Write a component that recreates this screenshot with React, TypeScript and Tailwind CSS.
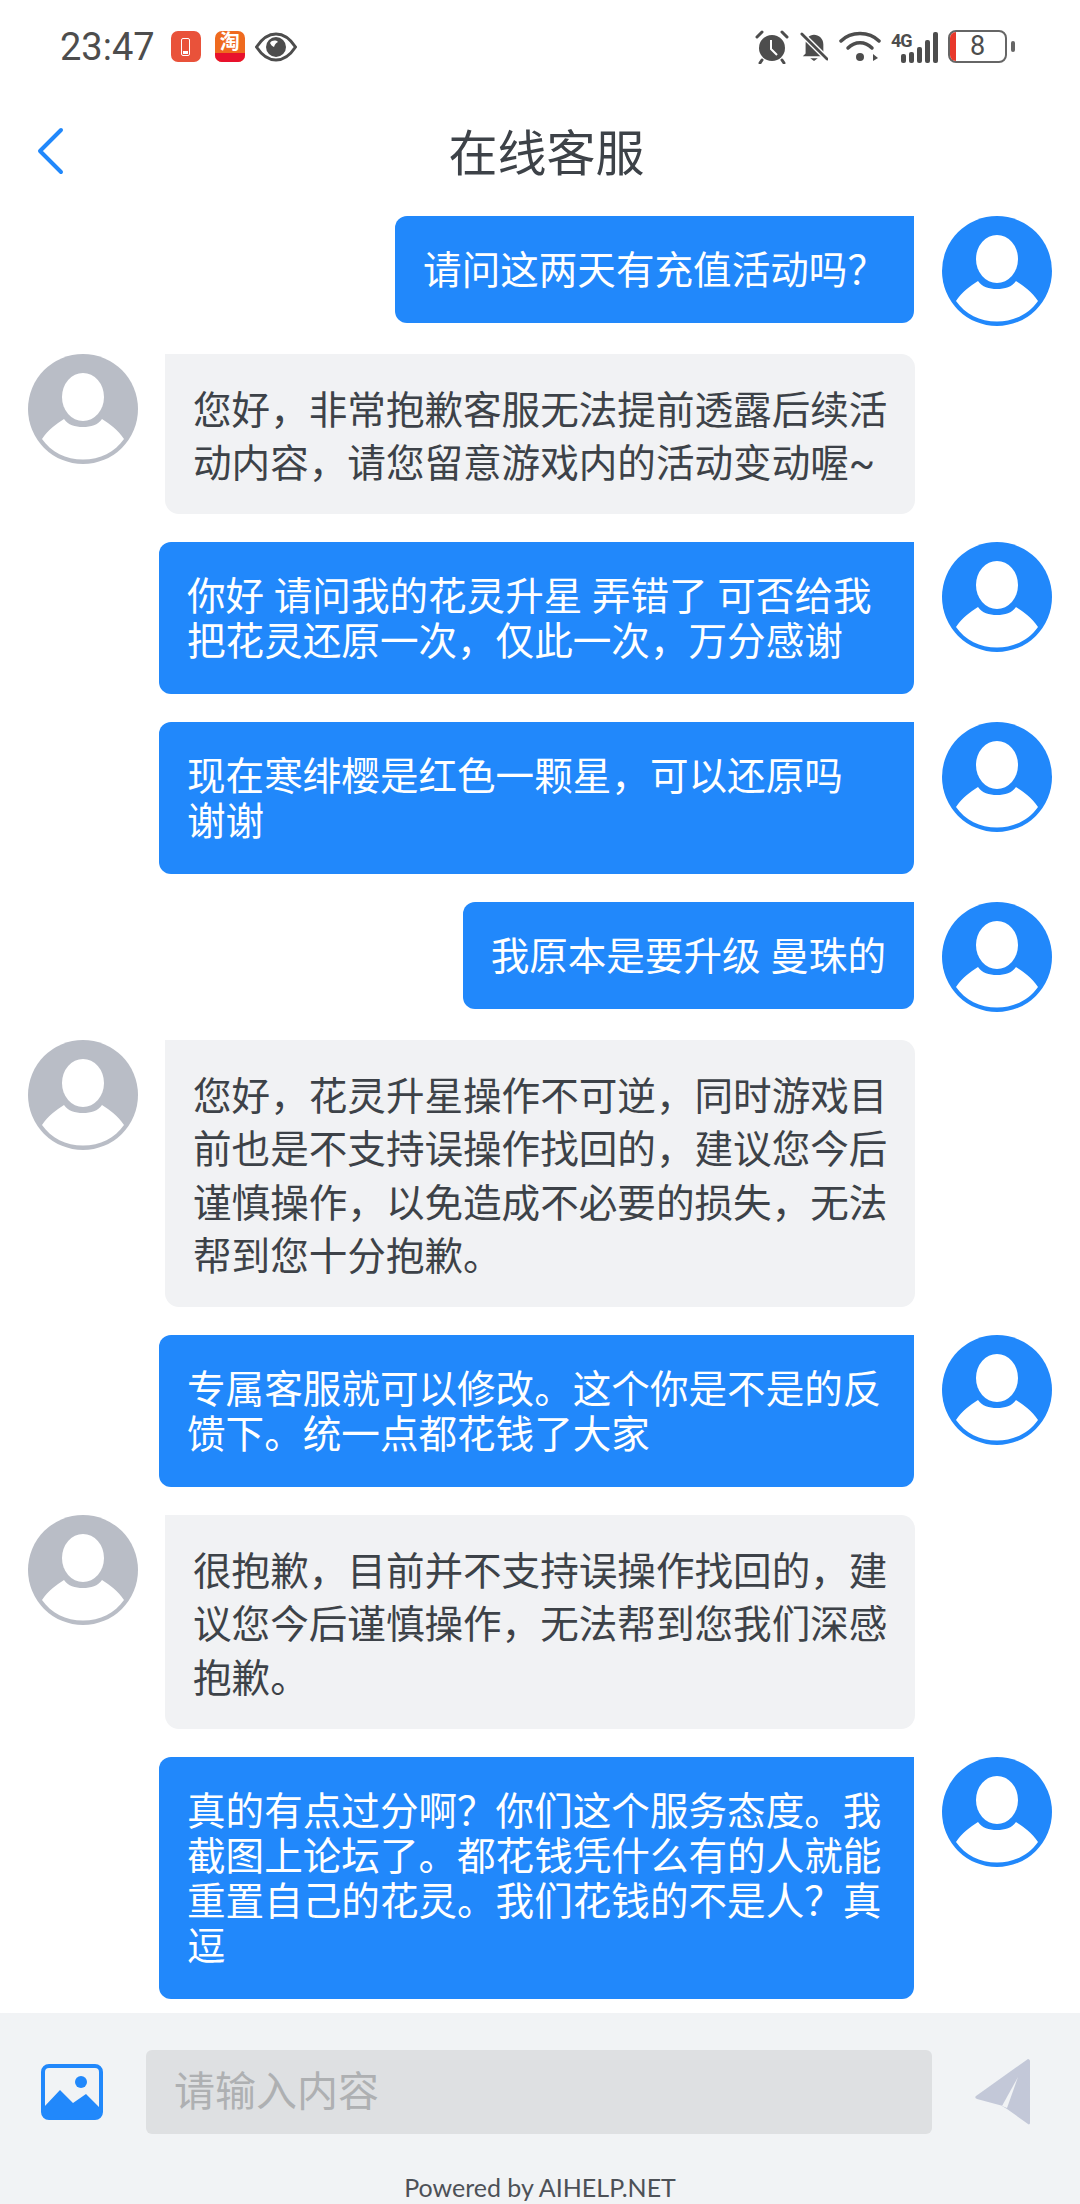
const cjk = "font-['Roboto','Noto_Sans_CJK_SC',sans-serif]";

type Msg = { from: "user" | "agent"; lines: string[] };

const messages: Msg[] = [
  { from: "user", lines: ["请问这两天有充值活动吗？"] },
  { from: "agent", lines: ["您好，非常抱歉客服无法提前透露后续活", "动内容，请您留意游戏内的活动变动喔~"] },
  { from: "user", lines: ["你好 请问我的花灵升星 弄错了 可否给我", "把花灵还原一次，仅此一次，万分感谢"] },
  { from: "user", lines: ["现在寒绯樱是红色一颗星，可以还原吗", "谢谢"] },
  { from: "user", lines: ["我原本是要升级 曼珠的"] },
  {
    from: "agent",
    lines: [
      "您好，花灵升星操作不可逆，同时游戏目",
      "前也是不支持误操作找回的，建议您今后",
      "谨慎操作，以免造成不必要的损失，无法",
      "帮到您十分抱歉。",
    ],
  },
  { from: "user", lines: ["专属客服就可以修改。这个你是不是的反", "馈下。统一点都花钱了大家"] },
  { from: "agent", lines: ["很抱歉，目前并不支持误操作找回的，建", "议您今后谨慎操作，无法帮到您我们深感", "抱歉。"] },
  {
    from: "user",
    lines: [
      "真的有点过分啊？你们这个服务态度。我",
      "截图上论坛了。都花钱凭什么有的人就能",
      "重置自己的花灵。我们花钱的不是人？真",
      "逗",
    ],
  },
];

function Avatar({ color }: { color: string }) {
  return (
    <svg width="110" height="110" viewBox="0 0 110 110" className="shrink-0">
      <circle cx="55" cy="55" r="55" fill={color} />
      <ellipse cx="55" cy="43" rx="21" ry="24" fill="#fff" />
      <path
        d="M14 85C20 76 28 70 36 65C40 71 47 73 55 73C63 73 70 71 74 65C82 70 90 76 96 85C87 98 72 105.5 55 105.5C38 105.5 23 98 14 85Z"
        fill="#fff"
      />
    </svg>
  );
}

function Row({ msg }: { msg: Msg }) {
  if (msg.from === "user") {
    return (
      <div className="flex items-start justify-end pr-[28px]">
        <div
          className={`mr-[28px] rounded-b-[12px] rounded-tl-[12px] bg-[#2188fb] px-[28px] pb-[30px] pt-[32px] text-[38.6px] leading-[45px] text-white ${
            msg.lines.length > 1 ? "w-[755px]" : ""
          }`}
        >
          {msg.lines.map((l, i) => (
            <div key={i} className="whitespace-pre">{l}</div>
          ))}
        </div>
        <Avatar color="#2188fb" />
      </div>
    );
  }
  return (
    <div className="flex items-start pl-[28px]">
      <Avatar color="#b9bdc6" />
      <div className="ml-[27px] w-[750px] rounded-b-[14px] rounded-tr-[14px] bg-[#f1f2f4] px-[28px] pb-[23.5px] pt-[29.5px] text-[38.6px] leading-[53.5px] text-[#3d4248]">
        {msg.lines.map((l, i) => (
          <div key={i} className="whitespace-pre">{l}</div>
        ))}
      </div>
    </div>
  );
}

function StatusBar() {
  return (
    <div className="flex h-[92px] items-center justify-between pl-[60px] pr-[65px] pt-[1px] text-[#4d4d4d]">
      <div className="flex items-center">
        <span className="text-[38px] leading-none">23:47</span>
        <div className="ml-[16px] flex h-[31px] w-[30px] items-center justify-center rounded-[7px] bg-[#e9523a]">
          <div className="flex h-[18px] w-[9px] flex-col justify-end rounded-[2px] border border-white p-[1px]">
            <div className="h-[3px] bg-white" />
          </div>
        </div>
        <div className="ml-[14px] flex h-[31px] w-[30px] flex-col overflow-hidden rounded-[7px] bg-[#ef6a1f]">
          <div className="flex h-[22px] items-center justify-center text-[20px] font-bold leading-none text-white">淘</div>
          <div className="h-[9px] bg-[#e8112d]" />
        </div>
        <svg width="42" height="30" viewBox="0 0 42 30" className="ml-[10px]">
          <path d="M1.5 15C8 5 14 2 21 2C28 2 34 5 40.500 15C34 25 28 28 21 28C14 28 8 25 1.500 15Z" fill="none" stroke="#4d4d4d" strokeWidth="3" />
          <circle cx="21" cy="15" r="10" fill="#4d4d4d" />
          <path d="M15 11C17 8 21 8 23 10C21 11 20 12 19 15C17 14 16 13 15 11Z" fill="#fff" />
        </svg>
      </div>
      <div className="flex items-center">
        <svg width="34" height="34" viewBox="0 0 34 34">
          <circle cx="17" cy="18" r="13" fill="#4d4d4d" />
          <path d="M16 10V19L22 25" fill="none" stroke="#fff" strokeWidth="2" />
          <path d="M2 7L7 2M32 7L27 2M7 30L5 33M27 30L29 33" stroke="#4d4d4d" strokeWidth="3" strokeLinecap="round" />
        </svg>
        <svg width="28" height="32" viewBox="0 0 30 32" className="ml-[11px]">
          <path d="M6 23V13C6 7 10 3 15 3C20 3 25 7 25 13V23L28 26H3Z" fill="#4d4d4d" />
          <path d="M11 28H19L15 31Z" fill="#4d4d4d" />
          <path d="M2 2L29 29" stroke="#fff" strokeWidth="6" />
          <path d="M2 2L29 29" stroke="#4d4d4d" strokeWidth="3" strokeLinecap="round" />
        </svg>
        <svg width="42" height="32" viewBox="0 0 42 32" className="ml-[11px]">
          <path d="M2 10C12 0 30 0 40 10" fill="none" stroke="#4d4d4d" strokeWidth="3.5" strokeLinecap="round" />
          <path d="M9 17C16 10 26 10 33 17" fill="none" stroke="#4d4d4d" strokeWidth="3.5" strokeLinecap="round" />
          <circle cx="21" cy="26" r="4" fill="#4d4d4d" />
          <path d="M34 30V23L39 27Z" fill="#4d4d4d" />
        </svg>
        <div className="relative ml-[10px] h-[32px] w-[47px]">
          <span className="absolute left-0 top-[1px] text-[18px] font-bold leading-none tracking-[-1px]">4G</span>
          <div className="absolute bottom-0 right-0 flex items-end gap-[3px]">
            <div className="h-[9px] w-[5px] rounded-[2px] bg-[#4d4d4d]" />
            <div className="h-[11px] w-[5px] rounded-[2px] bg-[#4d4d4d]" />
            <div className="h-[16px] w-[5px] rounded-[2px] bg-[#4d4d4d]" />
            <div className="h-[23px] w-[5px] rounded-[2px] bg-[#4d4d4d]" />
            <div className="h-[31px] w-[5px] rounded-[2px] bg-[#4d4d4d]" />
          </div>
        </div>
        <div className="ml-[10px] flex h-[33px] w-[59px] items-center overflow-hidden rounded-[8px] border-[2px] border-[#666]">
          <div className="h-full w-[6px] bg-[#e8382b]" />
          <span className="flex-1 pr-[6px] text-center text-[27px] leading-none">8</span>
        </div>
        <div className="ml-[4px] h-[11px] w-[4px] rounded-[2px] bg-[#666]" />
      </div>
    </div>
  );
}

export default function App() {
  return (
    <div className={`${cjk} flex h-[2204px] w-[1080px] flex-col overflow-hidden bg-white`}>
      <StatusBar />
      <div className="relative flex h-[124px] shrink-0 items-center justify-center pl-[13px] text-[49px] leading-none text-[#3d4248]">
        <svg width="28" height="48" viewBox="0 0 28 48" className="absolute left-[36px] top-[35px]">
          <path d="M25 3L4 24L25 45" fill="none" stroke="#2188fb" strokeWidth="4" strokeLinecap="round" strokeLinejoin="round" />
        </svg>
        在线客服
      </div>
      <div className="flex flex-1 flex-col gap-[28px]">
        {messages.map((m, i) => (
          <Row key={i} msg={m} />
        ))}
      </div>
      <div className="flex h-[191px] shrink-0 flex-col bg-[#f1f3f5]">
        <div className="flex items-center pt-[37px]">
          <svg width="62" height="56" viewBox="0 0 62 56" className="ml-[41px]">
            <rect x="2" y="2" width="58" height="52" rx="6" fill="none" stroke="#2188fb" strokeWidth="4" />
            <circle cx="40" cy="18" r="6" fill="#2188fb" />
            <path d="M3 43L19 26L32 39L45 30L59 44V49C59 52 57 54 54 54H8C5 54 3 52 3 49Z" fill="#2188fb" />
          </svg>
          <div className="ml-[43px] flex h-[84px] w-[786px] items-center rounded-[6px] bg-[#dee0e2] px-[28px] pt-[2px] text-[41px] text-[#aeb0b2]">
            请输入内容
          </div>
          <svg width="56" height="68" viewBox="0 0 56 68" className="ml-[42px]">
            <path d="M54 1C55 1 56 2 56 3V32L29 48L3 41C1 40 1 39 2 38Z" fill="#c3c8d8" />
            <path d="M45 18L28 48L33 51L54 66C55 67 56 66 56 65V30Z" fill="#c3c8d8" />
            <path d="M44 19L28 48L33 50Z" fill="#f1f3f5" />
          </svg>
        </div>
        <div className="mt-[41px] text-center font-['Lato',sans-serif] text-[25px] leading-none text-[#4d5157]">Powered by AIHELP.NET</div>
      </div>
    </div>
  );
}
